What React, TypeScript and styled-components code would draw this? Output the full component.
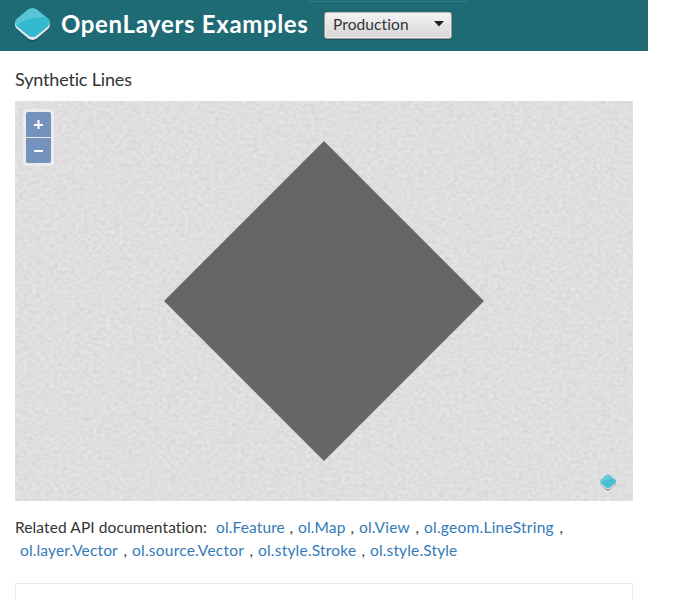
import React from "react";
import styled, { createGlobalStyle } from "styled-components";

const GlobalStyle = createGlobalStyle`
  * { box-sizing: border-box; }
  body {
    margin: 0;
    background: #fff;
    color: #333;
    font-family: Lato, "Open Sans", sans-serif;
    font-size: 16px;
    font-variant-ligatures: none;
    overflow: hidden;
  }
`;

const Page = styled.div`
  width: 648px;
  height: 600px;
  overflow: hidden;
`;

const Navbar = styled.header`
  position: relative;
  display: flex;
  align-items: flex-start;
  height: 51px;
  padding-left: 15px;
  background: #1f6b75;
`;

const NavLine = styled.div`
  position: absolute;
  top: 1px;
  left: 308px;
  width: 160px;
  height: 1px;
  background: #337983;
`;

const Logo = styled.svg`
  flex: none;
  width: 35px;
  height: 36px;
  margin-top: 7px;
`;

const Brand = styled.a`
  width: 248px;
  margin: 8px 15px 0 11px;
  color: #fff;
  font-size: 24px;
  font-weight: 700;
  line-height: 32px;
  letter-spacing: 0.65px;
  white-space: nowrap;
`;

const Select = styled.button`
  display: flex;
  align-items: center;
  justify-content: space-between;
  width: 128px;
  height: 27px;
  margin-top: 12px;
  padding: 0 7px 3px 8px;
  border: 1px solid #999590;
  border-top-color: #bcbbb9;
  border-radius: 3px;
  background: linear-gradient(#f3f3f3, #d5d5d5);
  box-shadow: inset 0 0 0 1px #f0f0f0, 0 1px 1px #195660;
  color: #333;
  font: 15.5px/20px Lato, sans-serif;
  font-variant-ligatures: none;
  letter-spacing: 0.1px;
`;

const Arrow = styled.svg`
  width: 10px;
  height: 6px;
`;

const Content = styled.main`
  padding: 0 15px;
`;

const Title = styled.h4`
  height: 50px;
  margin: 0;
  padding-top: 18px;
  font-size: 18px;
  font-weight: 400;
  line-height: 20px;
  letter-spacing: -0.17px;
`;

const MapView = styled.div`
  position: relative;
  width: 618px;
  height: 400px;
  background: #dedede;
`;

const MapCanvas = styled.svg`
  display: block;
  width: 618px;
  height: 400px;
`;

const Zoom = styled.div`
  position: absolute;
  top: 8px;
  left: 8px;
  display: flex;
  flex-direction: column;
  gap: 1px;
  padding: 3px;
  border-radius: 4px;
  background: rgba(255, 255, 255, 0.4);
`;

const ZoomButton = styled.button<{ $end?: boolean }>`
  display: flex;
  align-items: center;
  justify-content: center;
  width: 25px;
  height: 25px;
  padding: 0;
  border: 0;
  border-radius: ${(p) => (p.$end ? "0 0 2px 2px" : "2px 2px 0 0")};
  background: #7492bc;
  color: #fff;
`;

const MapLogo = styled(Logo)`
  position: absolute;
  top: 373px;
  left: 585px;
  width: 16px;
  height: 17px;
  margin: 0;
  opacity: 0.88;
`;

const Docs = styled.section`
  height: 82px;
  padding-top: 15px;
  font-size: 15.5px;
  line-height: 23px;
`;

const DocRow = styled.div<{ $indent?: number }>`
  display: flex;
  padding-left: ${(p) => p.$indent ?? 0}px;
  white-space: nowrap;
`;

const DocLabel = styled.span`
  width: 201px;
  letter-spacing: 0.1px;
`;

const DocItem = styled.span<{ $width: number }>`
  display: flex;
  justify-content: space-between;
  width: ${(p) => p.$width}px;
  margin-right: 5px;
`;

const DocLink = styled.a<{ $spacing: number }>`
  color: #337ab7;
  letter-spacing: ${(p) => p.$spacing}px;
`;

const SourceBox = styled.div`
  height: 40px;
  border: 1px solid #eaeaea;
`;

const LayerIcon = ({ id }: { id: string }) => (
  <>
    <defs>
      <clipPath id={id}>
        <path d="M13 2.4Q17.5-.6 22 2.4L33 11.6Q37 15.5 33 19.2L22 28.2Q17.5 31.6 13 28.2L2 19.2Q-2 15.5 2 11.6Z" />
      </clipPath>
    </defs>
    <path fill="#155660" d="M0 18h35q.3 3-2 5L22 32.4Q17.5 37 13 32.4L2 23Q-.3 21 0 18Z" />
    <path fill="#e4e7eb" d="M0 16h35v2q0 2-2 4L22 31.2Q17.5 34.6 13 31.2L2 22Q0 20 0 18Z" />
    <g clipPath={`url(#${id})`}>
      <path fill="#57c5d7" d="M0 0h35v31H0Z" />
      <path fill="#34bace" d="M0 19Q12 9 35 10v21H0Z" />
    </g>
  </>
);

const links: { text: string; width: number; spacing: number }[][] = [
  [
    { text: "ol.Feature", width: 77, spacing: 0.12 },
    { text: "ol.Map", width: 56, spacing: 0.15 },
    { text: "ol.View", width: 60, spacing: 0.2 },
    { text: "ol.geom.LineString", width: 139, spacing: 0.25 },
  ],
  [
    { text: "ol.layer.Vector", width: 107, spacing: 0.15 },
    { text: "ol.source.Vector", width: 121, spacing: 0.23 },
    { text: "ol.style.Stroke", width: 107, spacing: 0.21 },
    { text: "ol.style.Style", width: 87, spacing: 0.15 },
  ],
];

const renderLinks = (row: number) =>
  links[row].map((link, i) => (
    <DocItem key={link.text} $width={link.width}>
      <DocLink $spacing={link.spacing}>{link.text}</DocLink>
      {row === 1 && i === 3 ? null : <span>,</span>}
    </DocItem>
  ));

export default function App() {
  return (
    <Page>
      <GlobalStyle />
      <Navbar>
        <NavLine />
        <Logo viewBox="0 0 35 36">
          <LayerIcon id="brand" />
        </Logo>
        <Brand>OpenLayers Examples</Brand>
        <Select>
          Production
          <Arrow viewBox="0 0 10 6">
            <path d="M0 0h10L5 5.5Z" fill="#222" />
          </Arrow>
        </Select>
      </Navbar>
      <Content>
        <Title>Synthetic Lines</Title>
        <MapView>
          <MapCanvas viewBox="0 0 618 400">
            <filter id="paper" x="0" y="0" width="100%" height="100%" colorInterpolationFilters="sRGB">
              <feTurbulence type="fractalNoise" baseFrequency="0.23 0.3" numOctaves="5" seed="7" />
              <feColorMatrix values="0.09 0.04 0 0 0.807  0.09 0.04 0 0 0.807  0.09 0.04 0 0 0.807  0 0 0 0 1" />
            </filter>
            <rect width="618" height="400" filter="url(#paper)" />
            <path d="M309 40 469 200 309 360 149 200Z" fill="#666" />
          </MapCanvas>
          <Zoom>
            <ZoomButton aria-label="Zoom in">
              <svg width="9" height="9" viewBox="0 0 9 9">
                <path d="M0 5h9M4.5 0v9" stroke="#fff" strokeWidth="2" />
              </svg>
            </ZoomButton>
            <ZoomButton $end aria-label="Zoom out">
              <svg width="9" height="9" viewBox="0 0 9 9">
                <path d="M0 5h9" stroke="#fff" strokeWidth="2" />
              </svg>
            </ZoomButton>
          </Zoom>
          <MapLogo viewBox="0 0 35 36" preserveAspectRatio="none">
            <LayerIcon id="attribution" />
          </MapLogo>
        </MapView>
        <Docs>
          <DocRow>
            <DocLabel>Related API documentation:</DocLabel>
            {renderLinks(0)}
          </DocRow>
          <DocRow $indent={5}>{renderLinks(1)}</DocRow>
        </Docs>
        <SourceBox />
      </Content>
    </Page>
  );
}
